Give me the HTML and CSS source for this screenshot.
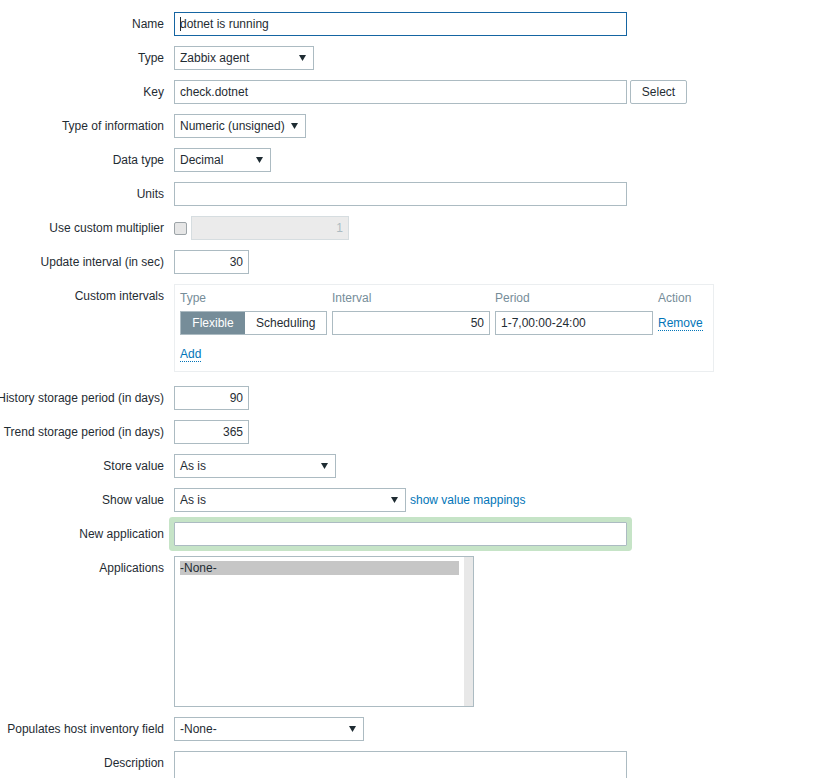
FILE: index.html
```html
<!DOCTYPE html>
<html lang="en">
<head>
    <meta charset="UTF-8">
    <title>Item</title>
    <link rel="stylesheet" href="styles.css">
</head>
<body>
    <div class="form-list">
        <div class="row">
            <div class="label">Name</div>
            <div class="field">
                <div class="textbox wide focused"><span class="caret"></span>dotnet is running</div>
            </div>
        </div>
        <div class="row">
            <div class="label">Type</div>
            <div class="field">
                <div class="select w-140">Zabbix agent<svg class="arrow" width="7" height="6" viewBox="0 0 7 6"><path d="M0 0h7L3.5 6z" fill="#1f2c33"/></svg></div>
            </div>
        </div>
        <div class="row">
            <div class="label">Key</div>
            <div class="field">
                <div class="textbox wide">check.dotnet</div>
                <button class="btn-alt">Select</button>
            </div>
        </div>
        <div class="row">
            <div class="label">Type of information</div>
            <div class="field">
                <div class="select w-132">Numeric (unsigned)<svg class="arrow" width="7" height="6" viewBox="0 0 7 6"><path d="M0 0h7L3.5 6z" fill="#1f2c33"/></svg></div>
            </div>
        </div>
        <div class="row">
            <div class="label">Data type</div>
            <div class="field">
                <div class="select w-97">Decimal<svg class="arrow" width="7" height="6" viewBox="0 0 7 6"><path d="M0 0h7L3.5 6z" fill="#1f2c33"/></svg></div>
            </div>
        </div>
        <div class="row">
            <div class="label">Units</div>
            <div class="field">
                <div class="textbox wide"></div>
            </div>
        </div>
        <div class="row">
            <div class="label">Use custom multiplier</div>
            <div class="field">
                <span class="checkbox"></span>
                <div class="textbox numeric disabled w-158">1</div>
            </div>
        </div>
        <div class="row">
            <div class="label">Update interval (in sec)</div>
            <div class="field">
                <div class="textbox numeric w-75">30</div>
            </div>
        </div>
        <div class="row row-intervals">
            <div class="label">Custom intervals</div>
            <div class="field">
                <div class="table-forms">
                    <div class="interval-grid">
                        <div class="th">Type</div>
                        <div class="th">Interval</div>
                        <div class="th">Period</div>
                        <div class="th">Action</div>

                        <div class="radio-seg">
                            <span class="seg active">Flexible</span>
                            <span class="seg">Scheduling</span>
                        </div>
                        <div class="textbox numeric">50</div>
                        <div class="textbox">1-7,00:00-24:00</div>
                        <div class="link-cell"><a class="link-action">Remove</a></div>

                        <div class="link-cell add-cell"><a class="link-action">Add</a></div>
                    </div>
                </div>
            </div>
        </div>
        <div class="row">
            <div class="label">History storage period (in days)</div>
            <div class="field">
                <div class="textbox numeric w-75">90</div>
            </div>
        </div>
        <div class="row">
            <div class="label">Trend storage period (in days)</div>
            <div class="field">
                <div class="textbox numeric w-75">365</div>
            </div>
        </div>
        <div class="row">
            <div class="label">Store value</div>
            <div class="field">
                <div class="select w-162">As is<svg class="arrow" width="7" height="6" viewBox="0 0 7 6"><path d="M0 0h7L3.5 6z" fill="#1f2c33"/></svg></div>
            </div>
        </div>
        <div class="row">
            <div class="label">Show value</div>
            <div class="field">
                <div class="select w-232">As is<svg class="arrow" width="7" height="6" viewBox="0 0 7 6"><path d="M0 0h7L3.5 6z" fill="#1f2c33"/></svg></div>
                <a class="link">show value mappings</a>
            </div>
        </div>
        <div class="row">
            <div class="label">New application</div>
            <div class="field">
                <div class="textbox wide highlight"></div>
            </div>
        </div>
        <div class="row">
            <div class="label">Applications</div>
            <div class="field">
                <div class="listbox">
                    <div class="options">
                        <div class="option selected">-None-</div>
                    </div>
                    <div class="scroll-track"></div>
                </div>
            </div>
        </div>
        <div class="row">
            <div class="label">Populates host inventory field</div>
            <div class="field">
                <div class="select w-190">-None-<svg class="arrow" width="7" height="6" viewBox="0 0 7 6"><path d="M0 0h7L3.5 6z" fill="#1f2c33"/></svg></div>
            </div>
        </div>
        <div class="row">
            <div class="label">Description</div>
            <div class="field">
                <div class="textarea wide"></div>
            </div>
        </div>
    </div>
</body>
</html>
```
FILE: styles.css
```css
body {
    margin: 0;
    padding: 12px 0 0;
    font-family: "Liberation Sans", Arial, sans-serif;
    font-size: 12px;
    color: #1f2c33;
    background: #fff;
    overflow: hidden;
}
.row {
    display: flex;
    gap: 10px;
    margin-bottom: 10px;
}
.row-intervals {
    margin-bottom: 14px;
}
.label {
    width: 164px;
    flex: none;
    display: flex;
    justify-content: flex-end;
    line-height: 24px;
    white-space: nowrap;
}
.field {
    display: flex;
    align-items: center;
    gap: 3px;
    align-self: flex-start;
}
.textbox, .select, .textarea {
    box-sizing: border-box;
    height: 24px;
    line-height: 22px;
    border: 1px solid #acbbc2;
    padding: 0 5px;
    background: #fff;
    white-space: nowrap;
}
.wide {
    width: 453px;
}
.w-75 { width: 75px; }
.w-97 { width: 97px; }
.w-132 { width: 132px; }
.w-140 { width: 140px; }
.w-158 { width: 158px; }
.w-162 { width: 162px; }
.w-190 { width: 190px; }
.w-232 { width: 232px; }
.focused {
    border-color: #1565a2;
    display: flex;
    align-items: center;
}
.caret {
    display: inline-block;
    width: 1px;
    height: 14px;
    background: #1f2c33;
    margin-right: -1px;
}
.numeric {
    text-align: right;
}
.disabled {
    background: #ebebeb;
    border-color: #d6dde0;
    color: #acbbc2;
    margin-left: 1px;
}
.highlight {
    box-shadow: 0 0 0 5px #c6e4c7;
    border-radius: 1px;
}
.select {
    display: flex;
    align-items: center;
    justify-content: space-between;
    padding-right: 7px;
}
.arrow {
    flex: none;
}
.btn-alt {
    width: 57px;
    height: 24px;
    box-sizing: border-box;
    padding: 0;
    border: 1px solid #acbbc2;
    border-radius: 2px;
    background: #fff;
    font-family: inherit;
    font-size: 12px;
    color: #1f2c33;
}
.checkbox {
    display: inline-block;
    width: 11px;
    height: 11px;
    border: 1px solid #9da4a8;
    border-radius: 2px;
    background: #e6e6e6;
}
.link {
    color: #0275b8;
    margin-left: 1px;
}
.textarea {
    height: 60px;
}
/* custom intervals */
.table-forms {
    width: 540px;
    box-sizing: border-box;
    border: 1px solid #ebeef0;
    padding: 5px;
}
.interval-grid {
    display: grid;
    grid-template-columns: 147px 158px 158px 1fr;
    column-gap: 5px;
    row-gap: 5px;
}
.th {
    color: #768d99;
    line-height: 16px;
}
.radio-seg {
    display: flex;
    height: 24px;
    box-sizing: border-box;
    border: 1px solid #acbbc2;
}
.seg {
    line-height: 22px;
    padding: 0 11px;
    flex: 1;
    text-align: center;
}
.seg.active {
    flex: none;
    width: 64px;
    padding: 0;
    background: #768d99;
    color: #fff;
}
.link-cell {
    line-height: 24px;
}
.add-cell {
    margin-top: 2px;
}
.link-action {
    color: #0275b8;
    border-bottom: 1px dotted #0275b8;
}
/* applications list */
.listbox {
    width: 300px;
    height: 151px;
    box-sizing: border-box;
    border: 1px solid #acbbc2;
    display: flex;
}
.options {
    flex: 1;
    padding: 4px 5px;
}
.option {
    line-height: 14px;
}
.option.selected {
    background: #c6c6c6;
}
.scroll-track {
    width: 9px;
    background: #e8e8e8;
}
```
